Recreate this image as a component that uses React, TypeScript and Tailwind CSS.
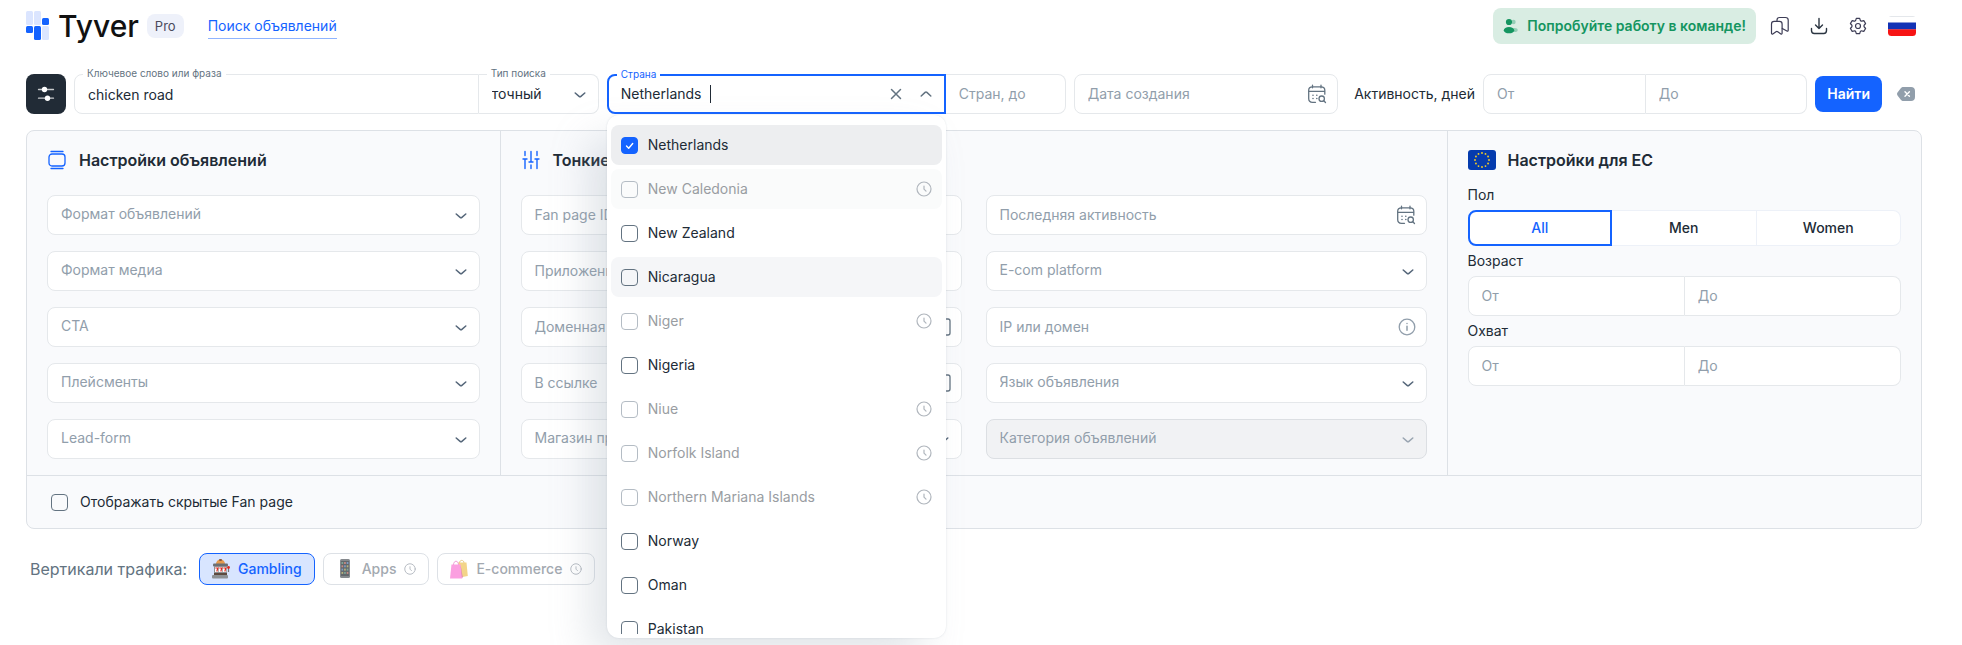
import { useState } from 'react';
import type { ReactNode } from 'react';
import clsx from 'clsx';

const COUNTRIES = [
  { name: 'Netherlands' },
  { name: 'New Caledonia', pending: true, tinted: true },
  { name: 'New Zealand' },
  { name: 'Nicaragua', hovered: true },
  { name: 'Niger', pending: true },
  { name: 'Nigeria' },
  { name: 'Niue', pending: true },
  { name: 'Norfolk Island', pending: true },
  { name: 'Northern Mariana Islands', pending: true },
  { name: 'Norway' },
  { name: 'Oman' },
  { name: 'Pakistan' },
];

const AD_SETTINGS = ['Формат объявлений', 'Формат медиа', 'CTA', 'Плейсменты', 'Lead-form'];

/* ---------- icons ---------- */

function LogoMark() {
  return (
    <svg width="24" height="30" viewBox="0 0 24 30">
      <rect x="0" y="0" width="7" height="14" rx="1.5" fill="#dbe5ff" />
      <rect x="8" y="0" width="7" height="14" rx="1.5" fill="#dbe5ff" />
      <rect x="16" y="7" width="7" height="7" rx="1.5" fill="#1463ff" />
      <rect x="0" y="15" width="7" height="7" rx="1.5" fill="#1463ff" />
      <rect x="8" y="15" width="7" height="14" rx="1.5" fill="#1463ff" />
      <rect x="16" y="15" width="7" height="14" rx="1.5" fill="#dbe5ff" />
    </svg>
  );
}

function TeamIcon() {
  return (
    <svg width="16" height="16" viewBox="0 0 16 16" fill="#149560">
      <circle cx="10.5" cy="4" r="2.2" opacity=".35" />
      <ellipse cx="11.5" cy="12" rx="3.2" ry="2.1" opacity=".35" />
      <circle cx="6" cy="4" r="3.1" />
      <ellipse cx="6" cy="12.2" rx="5.2" ry="3.1" />
    </svg>
  );
}

function BookmarksIcon() {
  return (
    <svg width="20" height="20" viewBox="0 0 20 20" fill="none" stroke="#3d3d56" strokeWidth="1.2" strokeLinejoin="round" strokeLinecap="round">
      <path d="M1.5 8c0-1.8.8-2.6 2.6-2.6h5.4c1.8 0 2.6.8 2.6 2.6v9.3c0 .8-.6 1-1.2.6l-3.2-2.2a1.5 1.5 0 0 0-1.7 0l-3.2 2.2c-.7.4-1.3.2-1.3-.6z" />
      <path d="M7 5.2v-1.2c0-1.6.8-2.5 2.5-2.5h6c1.8 0 2.7.9 2.7 2.6v10.200c0 .8-.6 1.1-1.3.7l-4.6-2.6" />
    </svg>
  );
}

function DownloadIcon() {
  return (
    <svg width="18" height="18" viewBox="0 0 18 18" fill="none" stroke="#2b3541" strokeWidth="1.4" strokeLinecap="round" strokeLinejoin="round">
      <path d="M9 1.5v10M5.5 8 9 11.5 12.5 8" />
      <path d="M1.5 11.5v2c0 2 .8 3 2.8 3h9.400c2 0 2.8-1 2.8-3v-2" />
    </svg>
  );
}

function GearIcon() {
  return (
    <svg width="20" height="20" viewBox="0 0 20 20" fill="none" stroke="#3d3d56" strokeWidth="1.2" strokeLinejoin="round">
      <circle cx="10" cy="10" r="2.5" />
      <path d="M8.3 2.3h3.4l.6 2c.2.6.9 1 1.5.8l2-.5 1.8 2.9-1.3 1.5c-.5.6-.5 1.400 0 2l1.3 1.5-1.8 2.9-2-.5c-.6-.2-1.3.2-1.5.8l-.6 2H8.3l-.6-2c-.2-.6-.9-1-1.5-.8l-2 .5-1.8-2.9 1.3-1.5c.5-.6.5-1.400 0-2L2.400 7.500l1.8-2.900 2 .5c.6.2 1.300-.2 1.500-.8z" />
    </svg>
  );
}

function RussianFlag() {
  return (
    <svg width="28" height="20" viewBox="0 0 28 20">
      <clipPath id="ru-flag">
        <rect width="28" height="20" rx="3.5" />
      </clipPath>
      <g clipPath="url(#ru-flag)">
        <rect width="28" height="20" fill="#fff" />
        <rect y="0" width="28" height="1" fill="#e4e7eb" />
        <rect y="6.5" width="28" height="7" fill="#1232b5" />
        <rect y="13.3" width="28" height="7" fill="#f71414" />
      </g>
    </svg>
  );
}

function EuFlag() {
  const stars = Array.from({ length: 12 }, (_, i) => (i * Math.PI) / 6);
  return (
    <svg width="28" height="20" viewBox="0 0 28 20">
      <rect width="28" height="20" rx="3" fill="#053bae" />
      {stars.map(a => (
        <circle key={a} cx={14 + 7 * Math.cos(a)} cy={10 + 7 * Math.sin(a)} r=".9" fill="#ffd21f" />
      ))}
    </svg>
  );
}

function FilterIcon() {
  return (
    <svg width="18" height="16" viewBox="0 0 18 16" fill="#fff" stroke="#fff" strokeWidth="1.3" strokeLinecap="round">
      <path d="M1.500 3.500h15" opacity=".75" />
      <path d="M1.500 12.200h15" opacity=".75" />
      <circle cx="7.5" cy="3.5" r="2.7" stroke="none" />
      <circle cx="10.5" cy="12.2" r="2.7" stroke="none" />
    </svg>
  );
}

function ChevronIcon({ up, className }: { up?: boolean; className?: string }) {
  return (
    <svg width="12" height="8" viewBox="0 0 12 8" fill="none" stroke="currentColor" strokeWidth="1.5" strokeLinecap="round" strokeLinejoin="round" className={className}>
      <path d={up ? 'M1.2 6 5.1 2.4q.9-.8 1.8 0L10.8 6' : 'M1.2 2 5.1 5.4q.9.8 1.8 0L10.8 2'} />
    </svg>
  );
}

function CloseIcon() {
  return (
    <svg width="12" height="12" viewBox="0 0 12 12" fill="none" stroke="currentColor" strokeWidth="1.5" strokeLinecap="round">
      <path d="m1.5 1.5 9 9M10.5 1.5l-9 9" />
    </svg>
  );
}

function CalendarSearchIcon() {
  return (
    <svg width="20" height="20" viewBox="0 0 20 20" fill="none" stroke="#637381" strokeWidth="1.3" strokeLinecap="round">
      <path d="M8.5 18.3H5.5c-2.5 0-3.8-1.3-3.8-3.8V6.3c0-2.2 1.3-3.5 3.8-3.5h8.5c2.5 0 3.8 1.3 3.8 3.5v3.9" />
      <path d="M5.5 1.2v2.6M14 1.2v2.6M2 7.3h15.5" />
      <circle cx="14.7" cy="14.7" r="2.7" />
      <path d="m16.8 16.8 1.7 1.7" />
      <path d="M6 11.3h.01M9.8 11.3h.01M6 14.5h.01M9.8 14.5h.01" strokeWidth="1.6" />
    </svg>
  );
}

function InfoIcon() {
  return (
    <svg width="18" height="18" viewBox="0 0 18 18" fill="none" stroke="#919eab" strokeWidth="1.3" strokeLinecap="round">
      <circle cx="9" cy="9" r="7.8" />
      <path d="M9 8.3v4M9 5.500v.1" strokeWidth="1.5" />
    </svg>
  );
}

function BoxIcon() {
  return (
    <svg width="18" height="18" viewBox="0 0 18 18" fill="none" stroke="#637381" strokeWidth="1.3">
      <rect x="1" y="1" width="16" height="16" rx="2" />
    </svg>
  );
}

function ClockIcon({ size }: { size: number }) {
  return (
    <svg width={size} height={size} viewBox="0 0 16 16" fill="none" stroke="#b0b6bd" strokeWidth="1.2" strokeLinecap="round" strokeLinejoin="round">
      <circle cx="8" cy="8" r="7" />
      <path d="M8 5v3.2l2 2" />
    </svg>
  );
}

function BackspaceIcon() {
  return (
    <svg width="18" height="14" viewBox="0 0 18 14">
      <path d="M6.5 0H14c2.6 0 4 1.4 4 4v6c0 2.6-1.4 4-4 4H6.5c-1.2 0-2-.4-2.7-1.2L.7 8.7c-.9-1.1-.9-2.3 0-3.4L3.8 1.2C4.5.4 5.3 0 6.5 0z" fill="#919eab" />
      <path d="m8 4.7 4.4 4.6M12.4 4.7 8 9.3" stroke="#fff" strokeWidth="1.4" strokeLinecap="round" />
    </svg>
  );
}

function FrameIcon() {
  return (
    <svg width="20" height="20" viewBox="-1 0 20 20" fill="none" stroke="#1463ff" strokeWidth="1.3" strokeLinecap="round">
      <rect x="1" y="4" width="16" height="12" rx="3" />
      <path d="M3 1.500h12M3 18.500h12" />
    </svg>
  );
}

function SlidersIcon() {
  return (
    <svg width="20" height="20" viewBox="-1 0 20 20" fill="none" stroke="#1463ff" strokeWidth="1.4" strokeLinecap="round">
      <path d="M3 1.5v4M3 9.5v9M1 9h4M9 1.5v10M9 15v3.5M7 12h4M15 1.5v4M15 9.5v9M13 9h4" />
    </svg>
  );
}

function SlotMachineIcon() {
  return (
    <svg width="18" height="20" viewBox="0 0 18 20">
      <path d="M4 5a4.5 4.5 0 0 1 9 0z" fill="#e59a4e" />
      <rect x="7" y="0" width="3" height="2" rx="1" fill="#8a5a3c" />
      <rect x="1" y="4.5" width="15" height="3" rx="1" fill="#6b6f73" />
      <rect x="2" y="7" width="13" height="7" fill="#8d9194" />
      <rect x="3" y="8" width="3.3" height="5" fill="#fff" />
      <rect x="7" y="8" width="3.3" height="5" fill="#fff" />
      <rect x="11" y="8" width="3.3" height="5" fill="#fff" />
      <path d="M3.3 9h2.5l-1 3.5M7.3 9h2.5l-1 3.5M11.3 9h2.5l-1 3.5" stroke="#e02b20" strokeWidth="1.2" fill="none" />
      <rect x="2" y="14" width="13" height="2.5" fill="#5c4a3f" />
      <rect x="0" y="16" width="16" height="3.5" rx="1" fill="#8d9194" />
      <path d="M16.5 9v4" stroke="#777" strokeWidth="1.2" />
      <circle cx="16.5" cy="8.5" r="1.4" fill="#e02b20" />
    </svg>
  );
}

function PhoneIcon() {
  const rows = [0, 1, 2, 3];
  const colors = ['#7fa695', '#c78b83', '#7d9cc4', '#b9b27e'];
  return (
    <svg width="18" height="20" viewBox="0 0 18 20">
      <rect x="4" y="0" width="10" height="19" rx="1.5" fill="#85898d" />
      <rect x="5" y="2" width="8" height="15" fill="#62676c" />
      {rows.map(r => rows.slice(0, 3).map(c => (
        <rect key={`${r}-${c}`} x={5.5 + c * 2.6} y={3 + r * 3.3} width="1.7" height="2" fill={colors[(r + c) % 4]} />
      )))}
    </svg>
  );
}

function BagsIcon() {
  return (
    <svg width="18" height="20" viewBox="0 0 18 20">
      <path d="M9.5 4c0-3.5 4.5-3.5 4.5 0" stroke="#e6c98a" fill="none" />
      <path d="M8 3.5h8.5l1.3 13.5-8 1.5z" fill="#f3d488" />
      <path d="M3.5 6c0-5 5-5 5 0" stroke="#ee9fd6" fill="none" />
      <path d="M1.5 5.5h9l1.5 14H0z" fill="#fb9fe0" />
      <path d="m10.5 5.5 2.2 12.5-.7 1.5z" fill="#d877bd" />
    </svg>
  );
}

/* ---------- controls ---------- */

function TextField({ label, icon, className }: { label: string; icon?: ReactNode; className?: string }) {
  return (
    <div className={clsx('flex h-10 min-w-0 items-center border border-[#e5e8eb] bg-white', className)}>
      <input
        aria-label={label}
        placeholder={label}
        className="h-full w-full min-w-0 bg-transparent px-[13px] pb-0.5 text-sm text-[#212b36] outline-none placeholder:text-[#919eab]"
      />
      {icon && <span className="pr-2.5">{icon}</span>}
    </div>
  );
}

function SelectField({ label, disabled }: { label: string; disabled?: boolean }) {
  return (
    <div className={clsx('relative h-10 rounded-lg border', disabled ? 'border-[#dcdfe3] bg-[#f1f2f4]' : 'border-[#e5e8eb] bg-white')}>
      <select
        aria-label={label}
        disabled={disabled}
        className="h-full w-full appearance-none bg-transparent px-[13px] pb-0.5 text-sm text-[#919eab] opacity-100 outline-none"
      >
        <option>{label}</option>
      </select>
      <ChevronIcon className={clsx('pointer-events-none absolute top-4 right-3', disabled ? 'text-[#9aa5b1]' : 'text-[#56677a]')} />
    </div>
  );
}

function RangeField({ label, className }: { label: string; className?: string }) {
  return (
    <div role="group" aria-label={label} className={clsx('flex min-w-0', className)}>
      <TextField label="От" className="flex-1 rounded-l-lg" />
      <TextField label="До" className="flex-1 rounded-r-lg border-l-0" />
    </div>
  );
}

function FloatingLabel({ htmlFor, active, children }: { htmlFor: string; active?: boolean; children: ReactNode }) {
  return (
    <label
      htmlFor={htmlFor}
      className={clsx('absolute -top-2.5 left-2 z-10 bg-white px-1 text-[10px] leading-4', active ? 'text-[#1463ff]' : 'text-[#637381]')}
    >
      {children}
    </label>
  );
}

function Checkbox({ id, checked, disabled, onChange }: { id: string; checked: boolean; disabled?: boolean; onChange: () => void }) {
  return (
    <span className="relative flex size-[17px] shrink-0">
      <input
        id={id}
        type="checkbox"
        checked={checked}
        disabled={disabled}
        onChange={onChange}
        className={clsx(
          'size-full appearance-none rounded-[4px] border',
          checked ? 'border-[#1463ff] bg-[#1463ff]' : disabled ? 'border-[#b4bcc4]' : 'border-[#637381]',
        )}
      />
      {checked && (
        <svg viewBox="0 0 17 17" fill="none" stroke="#fff" strokeWidth="1.4" strokeLinecap="round" strokeLinejoin="round" className="pointer-events-none absolute inset-0">
          <path d="m5.500 9 2.200 2.200 4-4.700" />
        </svg>
      )}
    </span>
  );
}

function SectionTitle({ icon, children }: { icon: ReactNode; children: ReactNode }) {
  return (
    <h2 className="flex h-7 items-center gap-3 text-base font-semibold text-[#212b36]">
      {icon}
      {children}
    </h2>
  );
}

function CountryMenu({ selected, onToggle }: { selected: string[]; onToggle: (name: string) => void }) {
  return (
    <div className="absolute -inset-x-0.5 top-full z-20 mt-[3px] rounded-xl bg-white py-1 shadow-[0_0_2px_rgba(145,158,171,0.3),-20px_20px_40px_-4px_rgba(145,158,171,0.28)]">
      <ul className="flex max-h-[515px] flex-col gap-1 overflow-y-auto px-1 pt-1.5 [scrollbar-width:none]">
        {COUNTRIES.map(c => {
          const checked = selected.includes(c.name);
          const id = `country-${c.name}`;
          return (
            <li
              key={c.name}
              className={clsx(
                'flex h-10 shrink-0 items-center gap-2.5 rounded-lg px-2.5',
                checked && 'bg-[#edeef0]',
                c.tinted && 'bg-[#fafbfb]',
                c.hovered && 'bg-[#f5f6f8]',
              )}
            >
              <Checkbox id={id} checked={checked} disabled={c.pending} onChange={() => onToggle(c.name)} />
              <label htmlFor={id} className={clsx('flex-1 text-sm', c.pending ? 'text-[#999da2]' : 'text-[#212b36]')}>
                {c.name}
              </label>
              {c.pending && <ClockIcon size={16} />}
            </li>
          );
        })}
      </ul>
    </div>
  );
}

/* ---------- page blocks ---------- */

function Header() {
  return (
    <header className="flex h-[52px] items-center justify-between">
      <div className="flex items-center">
        <a href="#home" className="flex items-center gap-2">
          <LogoMark />
          <span className="text-3xl leading-8 font-medium text-[#111]">Tyver</span>
        </a>
        <span className="ml-2 rounded-lg bg-[#eef1fa] px-2 py-0.5 text-[13px] leading-5 text-[#4a4a5c]">Pro</span>
        <a href="#search" className="ml-6 border-b border-[#8fb4ff] text-sm leading-6 text-[#1463ff]">Поиск объявлений</a>
      </div>
      <div className="flex items-center gap-5 pr-1.5">
        <button className="-mr-1.5 flex h-9 items-center gap-2 rounded-lg bg-[#d9ede3] px-2.5 text-sm font-semibold text-[#149560]">
          <TeamIcon />
          Попробуйте работу в команде!
        </button>
        <button aria-label="Закладки"><BookmarksIcon /></button>
        <button aria-label="Загрузки"><DownloadIcon /></button>
        <button aria-label="Настройки"><GearIcon /></button>
        <button aria-label="Язык"><RussianFlag /></button>
      </div>
    </header>
  );
}

function SearchBar() {
  const [keyword, setKeyword] = useState('chicken road');
  const [countries, setCountries] = useState(['Netherlands']);

  const toggle = (name: string) =>
    setCountries(prev => (prev.includes(name) ? prev.filter(n => n !== name) : [...prev, name]));

  return (
    <div className="mt-[22px] flex items-center gap-2">
      <button aria-label="Фильтры" className="flex size-10 shrink-0 items-center justify-center rounded-lg bg-[#212b36]">
        <FilterIcon />
      </button>

      <div className="flex min-w-0 flex-[526] text-sm text-[#212b36]">
        <div className="relative h-10 min-w-0 flex-1 rounded-l-lg border border-[#e5e8eb]">
          <FloatingLabel htmlFor="keyword">Ключевое слово или фраза</FloatingLabel>
          <input
            id="keyword"
            value={keyword}
            onChange={e => setKeyword(e.target.value)}
            className="h-full w-full bg-transparent px-[13px] outline-none"
          />
        </div>
        <div className="relative h-10 w-30 rounded-r-lg border border-l-0 border-[#e5e8eb]">
          <FloatingLabel htmlFor="match">Тип поиска</FloatingLabel>
          <select id="match" className="h-full w-full appearance-none bg-transparent px-[13px] outline-none">
            <option>точный</option>
          </select>
          <ChevronIcon className="pointer-events-none absolute top-4 right-3 text-[#56677a]" />
        </div>
      </div>

      <div className="flex min-w-0 flex-[460]">
        <div className="relative flex h-10 min-w-0 flex-1 items-center rounded-l-lg border-2 border-[#1463ff] bg-white pr-3 pl-3 text-sm text-[#212b36]">
          <FloatingLabel htmlFor="country" active>Страна</FloatingLabel>
          <span>{countries.join(', ')}</span>
          <span className="ml-2 h-[18px] w-px bg-[#212b36]" />
          <input id="country" className="min-w-0 flex-1 bg-transparent outline-none" />
          <div className="flex items-center gap-[18px] text-[#637381]">
            <button aria-label="Очистить" onClick={() => setCountries([])}><CloseIcon /></button>
            <button aria-label="Свернуть"><ChevronIcon up /></button>
          </div>
          <CountryMenu selected={countries} onToggle={toggle} />
        </div>
        <TextField label="Стран, до" className="w-30 rounded-r-lg border-l-0" />
      </div>

      <TextField label="Дата создания" icon={<CalendarSearchIcon />} className="flex-[263] rounded-lg" />

      <span className="ml-2 shrink-0 text-sm text-[#212b36]">Активность, дней</span>
      <RangeField label="Активность, дней" className="flex-[325]" />

      <button className="h-9 rounded-lg bg-[#1463ff] px-3 text-sm font-semibold text-white">Найти</button>
      <button aria-label="Сбросить" className="flex size-8 shrink-0 items-center justify-center">
        <BackspaceIcon />
      </button>
    </div>
  );
}

function GenderSwitch() {
  const [value, setValue] = useState('All');
  return (
    <div role="group" aria-label="Пол" className="grid h-9 grid-cols-3 text-sm font-medium">
      {['All', 'Men', 'Women'].map(option => (
        <button
          key={option}
          aria-pressed={option === value}
          onClick={() => setValue(option)}
          className={clsx(
            'bg-white first:rounded-l-lg last:rounded-r-lg',
            option === value ? 'border-2 border-[#1463ff] text-[#1463ff]' : 'border border-l-0 border-[#edf1f8] text-[#212b36]',
          )}
        >
          {option}
        </button>
      ))}
    </div>
  );
}

function FilterPanel() {
  const [showHidden, setShowHidden] = useState(false);
  return (
    <section className="mt-4 rounded-lg border border-[#dde1e6] bg-[#f9fafc]">
      <div className="grid grid-cols-[1fr_2fr_1fr] border-b border-[#dde1e6]">
        <div className="border-r border-[#dde1e6] px-5 pt-[15px] pb-4">
          <SectionTitle icon={<FrameIcon />}>Настройки объявлений</SectionTitle>
          <div className="mt-[21px] flex flex-col gap-4">
            {AD_SETTINGS.map(label => <SelectField key={label} label={label} />)}
          </div>
        </div>

        <div className="border-r border-[#dde1e6] px-5 pt-[15px] pb-4">
          <SectionTitle icon={<SlidersIcon />}>Тонкие настройки</SectionTitle>
          <div className="mt-[21px] grid grid-cols-2 gap-x-6">
            <div className="flex flex-col gap-4">
              <TextField label="Fan page ID" className="rounded-lg" />
              <TextField label="Приложение" className="rounded-lg" />
              <TextField label="Доменная зона" icon={<BoxIcon />} className="rounded-lg" />
              <TextField label="В ссылке" icon={<BoxIcon />} className="rounded-lg" />
              <SelectField label="Магазин приложений" />
            </div>
            <div className="flex flex-col gap-4">
              <TextField label="Последняя активность" icon={<CalendarSearchIcon />} className="rounded-lg" />
              <SelectField label="E-com platform" />
              <TextField label="IP или домен" icon={<InfoIcon />} className="rounded-lg" />
              <SelectField label="Язык объявления" />
              <SelectField label="Категория объявлений" disabled />
            </div>
          </div>
        </div>

        <div className="px-5 pt-[15px] pb-4 text-sm text-[#212b36]">
          <SectionTitle icon={<EuFlag />}>Настройки для ЕС</SectionTitle>
          <p className="mt-1.5 leading-[30px]">Пол</p>
          <GenderSwitch />
          <p className="leading-[30px]">Возраст</p>
          <RangeField label="Возраст" />
          <p className="leading-[30px]">Охват</p>
          <RangeField label="Охват" />
        </div>
      </div>

      <div className="flex h-[52px] items-center gap-3 px-6 text-sm text-[#212b36]">
        <Checkbox id="hidden-pages" checked={showHidden} onChange={() => setShowHidden(!showHidden)} />
        <label htmlFor="hidden-pages">Отображать скрытые Fan page</label>
      </div>
    </section>
  );
}

function VerticalChip({ icon, label, active }: { icon: ReactNode; label: string; active?: boolean }) {
  return (
    <button
      className={clsx(
        'flex h-8 items-center gap-2 rounded-lg border px-3 text-sm font-medium',
        active ? 'border-[#1463ff] bg-[#d8e5ff] text-[#1463ff]' : 'border-[#dde1e6] bg-white text-[#a3a9b0]',
      )}
    >
      {icon}
      {label}
      {!active && <ClockIcon size={12} />}
    </button>
  );
}

export default function App() {
  return (
    <div className="min-h-screen bg-white pr-10 pl-[26px] font-['Inter','Noto_Sans',sans-serif]">
      <Header />
      <SearchBar />
      <FilterPanel />
      <div className="mt-6 flex items-center gap-2 pl-1">
        <span className="mr-1 text-base text-[#637381]">Вертикали трафика:</span>
        <VerticalChip icon={<SlotMachineIcon />} label="Gambling" active />
        <VerticalChip icon={<PhoneIcon />} label="Apps" />
        <VerticalChip icon={<BagsIcon />} label="E-commerce" />
      </div>
    </div>
  );
}
